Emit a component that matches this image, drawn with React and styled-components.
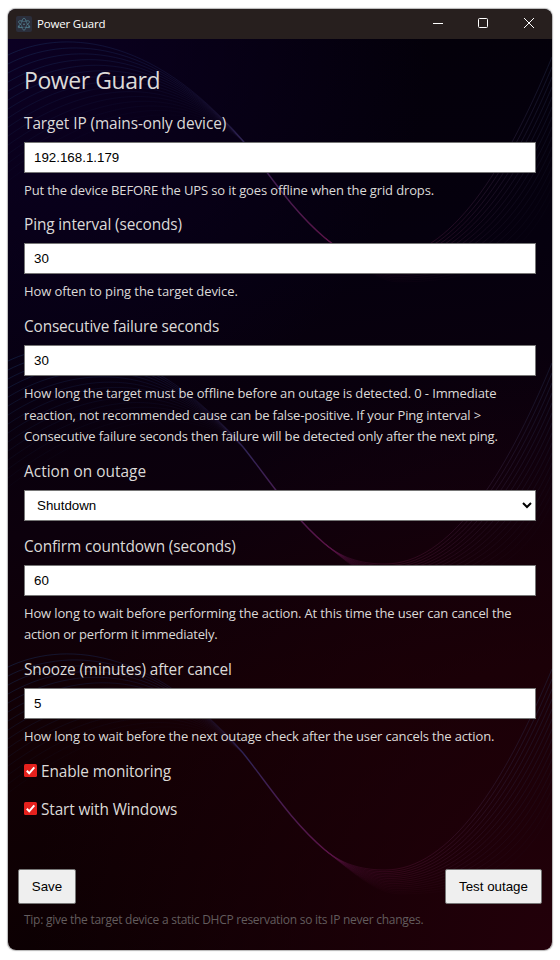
import React from "react";
import styled, { createGlobalStyle } from "styled-components";

const Global = createGlobalStyle`
  * { box-sizing: border-box; }
  body { margin: 0; background: #fff; }
`;

const Desktop = styled.div`
  width: 560px;
  height: 960px;
  padding: 9px 8px 10px;
  background: #fff;
`;

const Window = styled.div`
  position: relative;
  display: flex;
  flex-direction: column;
  height: 941px;
  overflow: hidden;
  border-radius: 8px;
  box-shadow: 0 0 1px 0.5px rgba(110, 110, 110, 0.5);
  font-family: "Open Sans", "Noto Sans", sans-serif;
  background:
    radial-gradient(ellipse 420px 420px at 0 30px, rgba(14, 0, 44, 0.75), transparent),
    radial-gradient(ellipse 520px 600px at 100% 100%, rgba(36, 0, 10, 0.95), transparent),
    linear-gradient(172deg, #030008 0%, #05000e 30%, #0c000c 52%, #120004 72%, #0a0002 100%);
`;

const Waves = styled.svg`
  position: absolute;
  left: 0;
  top: 30px;
  width: 544px;
  height: 911px;
  fill: none;
  stroke: url(#wave);
  stroke-width: 0.8;
`;

const TitleBar = styled.header`
  position: relative;
  display: flex;
  align-items: center;
  flex: 0 0 30px;
  padding-left: 8px;
  background: #271f1e;
  color: #fff;
`;

const AppIcon = styled.svg`
  width: 16px;
  height: 16px;
  margin-right: 5px;
`;

const WindowTitle = styled.span`
  flex: 1;
  font-size: 11.5px;
  line-height: 16px;
  letter-spacing: -0.18px;
`;

const WindowButtons = styled.svg`
  width: 136px;
  height: 30px;
  fill: none;
  stroke: #fff;
  stroke-width: 1;
`;

const Content = styled.main`
  position: relative;
  flex: 1;
  padding: 22px 16px 0;
  color: #dcdad8;
`;

const Heading = styled.h1`
  margin: 0 0 10.6px;
  height: 39px;
  font-size: 23px;
  font-weight: 400;
  line-height: 39px;
  letter-spacing: -0.43px;
`;

const Field = styled.div`
  display: flex;
  flex-direction: column;
  margin-bottom: 13.4px;
`;

const Label = styled.label`
  height: 25.6px;
  margin-bottom: 5.4px;
  font-size: 15.4px;
  line-height: 26.4px;
  letter-spacing: ${(p) => p.$track || "-0.12px"};
  white-space: nowrap;
`;

const Input = styled.input`
  height: 31px;
  padding: 0 9px;
  border: 1px solid #767676;
  border-radius: 0;
  background: #fff;
  color: #000;
  font: 13.333px "Liberation Sans", Arial, sans-serif;
`;

const SelectBox = styled.div`
  position: relative;
  display: flex;
`;

const Select = styled.select`
  flex: 1;
  height: 31px;
  padding: 0 12px;
  appearance: none;
  border: 1px solid #767676;
  border-radius: 0;
  background: #fff;
  color: #000;
  font: 13.333px "Liberation Sans", Arial, sans-serif;
`;

const Chevron = styled.svg`
  position: absolute;
  right: 4px;
  top: 11px;
  width: 10px;
  height: 8px;
  fill: none;
  stroke: #000;
  stroke-width: 2;
`;

const Hint = styled.div`
  margin-top: 7px;
  margin-bottom: -1.9px;
  font-size: 13px;
  line-height: 21.33px;
`;

const HintLine = styled.div`
  letter-spacing: ${(p) => p.$track || "-0.13px"};
  white-space: nowrap;
`;

const CheckRow = styled.label`
  display: flex;
  align-items: center;
  height: 25.6px;
  margin-bottom: 12.4px;
  font-size: 15.4px;
  letter-spacing: -0.12px;
`;

const CheckMark = styled.svg`
  width: 13px;
  height: 13px;
  margin: -3px 4px 0 0;
`;

const Actions = styled.div`
  display: flex;
  justify-content: space-between;
  margin: 46.2px -6px 0;
`;

const Button = styled.button`
  width: ${(p) => p.$width};
  height: 35px;
  padding: 0;
  border: 1px solid #767676;
  border-radius: 2px;
  background: #efefef;
  color: #000;
  font: 13.333px "Liberation Sans", Arial, sans-serif;
`;

const Tip = styled.div`
  margin-top: 5px;
  color: #625c5d;
  font-size: 12px;
  line-height: 21px;
  letter-spacing: -0.265px;
  white-space: nowrap;
`;

const strands = Array.from({ length: 15 }, (_, k) => k);

function WaveLines() {
  return (
    <Waves viewBox="8 39 544 911" aria-hidden="true">
      <defs>
        <linearGradient id="wave" gradientUnits="userSpaceOnUse" x1="8" y1="0" x2="552" y2="0">
          <stop offset="0" stopColor="#18305c" />
          <stop offset="0.26" stopColor="#1c2458" stopOpacity="0.8" />
          <stop offset="0.42" stopColor="#302454" stopOpacity="0.5" />
          <stop offset="0.6" stopColor="#641450" stopOpacity="0.5" />
          <stop offset="0.72" stopColor="#5c1238" stopOpacity="0.8" />
          <stop offset="0.88" stopColor="#38203e" />
          <stop offset="1" stopColor="#202848" />
        </linearGradient>
        <linearGradient id="core" gradientUnits="userSpaceOnUse" x1="220" y1="0" x2="345" y2="0">
          <stop offset="0" stopColor="#282050" stopOpacity="0" />
          <stop offset="0.2" stopColor="#302456" />
          <stop offset="0.5" stopColor="#481c50" />
          <stop offset="0.85" stopColor="#5a1448" />
          <stop offset="1" stopColor="#5a1448" stopOpacity="0" />
        </linearGradient>
      </defs>
      {[0, 306, 612].map((y) => (
        <g key={y} transform={`translate(0 ${y})`}>
          {strands.map((k) => (
            <g key={k} opacity={0.62 * (1 - k / 16)}>
              <path
                d={`M8 ${55 + 9 * k} C${60 + 4 * k} ${30 + 5 * k} ${150 + 3 * k} ${32 + 5 * k} 243 141`}
              />
              <path
                d={`M325 238 C${345 + k} ${254 + 0.9 * k} ${365 + k} ${258 + 1.7 * k} ${385 + k} ${258 + 1.7 * k} C${450 + k} ${258 + 1.7 * k} ${505 + k} ${170 + 7 * k} 552 ${57 + 10 * k}`}
              />
            </g>
          ))}
          <path
            d="M220 116 Q232 128 243 141 C268 172 290 208 325 238 Q336 247 345 251"
            stroke="url(#core)"
            strokeWidth="1.4"
          />
        </g>
      ))}
    </Waves>
  );
}

function TextField({ label, value, hints, track }) {
  return (
    <Field>
      <Label $track={track}>{label}</Label>
      <Input defaultValue={value} />
      <Hint>
        {hints.map(([text, spacing]) => (
          <HintLine key={text} $track={spacing}>{text}</HintLine>
        ))}
      </Hint>
    </Field>
  );
}

function Check({ label }) {
  return (
    <CheckRow>
      <CheckMark viewBox="0 0 13 13">
        <rect width="13" height="13" rx="1.5" fill="#e5211d" />
        <path d="M2.8 6.8 5.2 9.3 10.3 3.4" fill="none" stroke="#fff" strokeWidth="2" />
      </CheckMark>
      {label}
    </CheckRow>
  );
}

export default function App() {
  return (
    <Desktop>
      <Global />
      <Window>
        <WaveLines />
        <TitleBar>
          <AppIcon viewBox="0 0 16 16" fill="none" stroke="#528090" strokeWidth="0.75">
            <rect width="16" height="16" rx="2" fill="#2b2e3b" stroke="none" />
            <ellipse cx="8" cy="8.2" rx="6" ry="2.2" transform="rotate(28 8 8.2)" />
            <ellipse cx="8" cy="8.2" rx="6" ry="2.2" transform="rotate(-28 8 8.2)" />
            <ellipse cx="8" cy="8.2" rx="2.4" ry="6" />
            <circle cx="8" cy="8.2" r="2.7" fill="#2b2e3b" stroke="none" />
            <circle cx="8" cy="8.2" r="0.7" fill="#6a9cab" stroke="none" />
            <circle cx="2.8" cy="11" r="0.7" />
            <circle cx="13.2" cy="11" r="0.7" />
          </AppIcon>
          <WindowTitle>Power Guard</WindowTitle>
          <WindowButtons viewBox="416 9 136 30">
            <path d="M433 23.5h10" />
            <rect x="478.5" y="18.5" width="9" height="9" rx="1" />
            <path d="m524 18 10 10m0-10-10 10" />
          </WindowButtons>
        </TitleBar>
        <Content>
          <Heading>Power Guard</Heading>
          <TextField
            label="Target IP (mains-only device)"
            track="-0.09px"
            value="192.168.1.179"
            hints={[["Put the device BEFORE the UPS so it goes offline when the grid drops."]]}
          />
          <TextField
            label="Ping interval (seconds)"
            value="30"
            hints={[["How often to ping the target device.", "-0.08px"]]}
          />
          <TextField
            label="Consecutive failure seconds"
            track="-0.16px"
            value="30"
            hints={[
              ["How long the target must be offline before an outage is detected. 0 - Immediate", "-0.12px"],
              ["reaction, not recommended cause can be false-positive. If your Ping interval >", "-0.156px"],
              ["Consecutive failure seconds then failure will be detected only after the next ping.", "-0.174px"],
            ]}
          />
          <Field>
            <Label $track="0.03px">Action on outage</Label>
            <SelectBox>
              <Select defaultValue="Shutdown">
                <option>Shutdown</option>
              </Select>
              <Chevron viewBox="0 0 10 8"><path d="m1 2 4 4 4-4" /></Chevron>
            </SelectBox>
          </Field>
          <TextField
            label="Confirm countdown (seconds)"
            value="60"
            hints={[
              ["How long to wait before performing the action. At this time the user can cancel the", "-0.143px"],
              ["action or perform it immediately.", "-0.2px"],
            ]}
          />
          <TextField
            label="Snooze (minutes) after cancel"
            value="5"
            hints={[["How long to wait before the next outage check after the user cancels the action.", "-0.15px"]]}
          />
          <Check label="Enable monitoring" />
          <Check label="Start with Windows" />
          <Actions>
            <Button $width="58px">Save</Button>
            <Button $width="97px">Test outage</Button>
          </Actions>
          <Tip>Tip: give the target device a static DHCP reservation so its IP never changes.</Tip>
        </Content>
      </Window>
    </Desktop>
  );
}
